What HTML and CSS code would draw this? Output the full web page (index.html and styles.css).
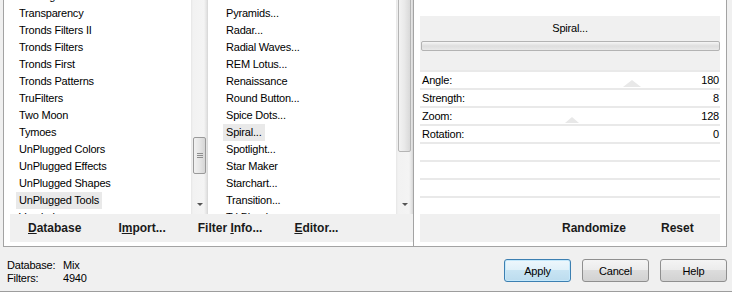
FILE: index.html
```html
<!DOCTYPE html>
<html lang="en">
<head>
    <meta charset="UTF-8">
    <title>Filters Unlimited</title>
    <link rel="stylesheet" href="styles.css">
</head>
<body>
    <div class="dialog">
        <div class="panes">
            <div class="frame filters">
                <div class="lists">
                    <div class="listbox cats">
                        <ul class="items">
                            <li>Tramages</li>
                            <li>Transparency</li>
                            <li>Tronds Filters II</li>
                            <li>Tronds Filters</li>
                            <li>Tronds First</li>
                            <li>Tronds Patterns</li>
                            <li>TruFilters</li>
                            <li>Two Moon</li>
                            <li>Tymoes</li>
                            <li>UnPlugged Colors</li>
                            <li>UnPlugged Effects</li>
                            <li>UnPlugged Shapes</li>
                            <li class="selected">UnPlugged Tools</li>
                            <li>Vanderlee</li>
                        </ul>
                        <div class="scrollbar">
                            <div class="thumb short"><span class="grip"></span></div>
                            <span class="arrow"></span>
                        </div>
                    </div>
                    <div class="listbox names">
                        <ul class="items">
                            <li>Pool...</li>
                            <li>Pyramids...</li>
                            <li>Radar...</li>
                            <li>Radial Waves...</li>
                            <li>REM Lotus...</li>
                            <li>Renaissance</li>
                            <li>Round Button...</li>
                            <li>Spice Dots...</li>
                            <li class="selected">Spiral...</li>
                            <li>Spotlight...</li>
                            <li>Star Maker</li>
                            <li>Starchart...</li>
                            <li>Transition...</li>
                            <li>Tri Blend...</li>
                        </ul>
                        <div class="scrollbar">
                            <div class="thumb tall"></div>
                            <span class="arrow"></span>
                        </div>
                    </div>
                </div>
                <div class="band actions">
                    <span class="link"><u>D</u>atabase</span>
                    <span class="link">I<u>m</u>port...</span>
                    <span class="link">Filter <u>I</u>nfo...</span>
                    <span class="link"><u>E</u>ditor...</span>
                </div>
            </div>

            <div class="frame params">
                <div class="band title">
                    <div class="name">Spiral...</div>
                    <div class="meter"></div>
                </div>
                <div class="rows">
                    <div class="row"><span>Angle:</span><span>180</span><i class="knob" style="left: 203px"></i></div>
                    <div class="row"><span>Strength:</span><span>8</span></div>
                    <div class="row"><span>Zoom:</span><span>128</span><i class="knob small" style="left: 145px"></i></div>
                    <div class="row"><span>Rotation:</span><span>0</span></div>
                    <div class="row"></div>
                    <div class="row"></div>
                    <div class="row"></div>
                    <div class="row"></div>
                </div>
                <div class="band tools">
                    <span class="link">Randomize</span>
                    <span class="link">Reset</span>
                </div>
            </div>
        </div>

        <div class="footer">
            <div class="status">
                <span>Database:</span><span>Mix</span>
                <span>Filters:</span><span>4940</span>
            </div>
            <div class="buttons">
                <button class="default">Apply</button>
                <button>Cancel</button>
                <button>Help</button>
            </div>
        </div>
    </div>
</body>
</html>
```

FILE: styles.css
```css
body {
    margin: 0;
    background-color: #f0f0f0;
    font-family: "Liberation Sans", Arial, sans-serif;
    font-size: 11px;
    letter-spacing: -0.2px;
    color: #000;
}

.dialog {
    width: 732px;
    height: 292px;
    overflow: hidden;
    border-bottom: 1px solid #9d9d9d;
    box-sizing: border-box;
}

.panes {
    display: flex;
    height: 247px;
    padding-left: 3px;
}

.frame {
    background-color: #fff;
    border: 1px solid #a3a3a3;
    border-top: none;
    box-sizing: border-box;
    display: flex;
    flex-direction: column;
}

.filters {
    width: 411px;
}

.params {
    width: 313px;
    border-left: none;
    padding: 0 6px 0 6px;
}

/* list boxes */
.lists {
    display: flex;
    height: 214px;
    padding-left: 6px;
}

.listbox {
    display: flex;
    height: 214px;
    overflow: hidden;
}

.cats {
    width: 204px;
}

.names {
    width: 199px;
}

.items {
    list-style: none;
    margin: -12px 0 0 0;
    padding: 0 0 0 6px;
    flex: 1;
}

.names .items {
    padding-left: 9px;
}

.items li {
    height: 17px;
    line-height: 17px;
    padding: 0 3px;
    white-space: nowrap;
}

.items li.selected {
    display: table;
    background-color: #e9e9e9;
}

.scrollbar {
    width: 17px;
    display: flex;
    flex-direction: column;
    align-items: center;
    background: linear-gradient(to right, #e6e6e6 0, #f2f2f2 2px, #f4f4f4 13px, #e0e0e0 16px, #d4d4d4 17px);
}

.cats .scrollbar {
    margin-right: 6px;
}

.thumb {
    width: 13px;
    box-sizing: border-box;
    border: 1px solid #9a9a9a;
    border-radius: 2px;
    background: linear-gradient(to right, #f1f1f1, #e6e6e6 50%, #d6d6d6);
    display: flex;
    align-items: center;
    justify-content: center;
}

.thumb.short {
    margin-top: 137px;
    height: 37px;
}

.thumb.tall {
    margin-top: -10px;
    height: 162px;
    border-color: #b5b5b5;
    background: linear-gradient(to right, #f3f3f3, #e9e9e9 50%, #d9d9d9);
}

.grip {
    width: 6px;
    height: 5px;
    background: repeating-linear-gradient(#8e8e8e 0, #8e8e8e 1px, transparent 1px, transparent 2px);
}

.arrow {
    margin-top: auto;
    margin-bottom: 8px;
    width: 0;
    height: 0;
    border-left: 3px solid transparent;
    border-right: 3px solid transparent;
    border-top: 3px solid #555;
}

/* grey bands */
.band {
    background-color: #f0f0f0;
}

.actions {
    height: 28px;
    margin-left: 6px;
    display: flex;
    align-items: center;
    padding-left: 18px;
}

.link {
    font-size: 12px;
    font-weight: bold;
    letter-spacing: 0;
    color: #1a1a1a;
}

.actions .link {
    margin-right: 37px;
}

.actions .link:nth-child(2) {
    margin-right: 32px;
}

.actions .link:nth-child(3) {
    margin-right: 32px;
}

.title {
    margin-top: 16px;
    height: 54px;
    padding-top: 5px;
    box-sizing: border-box;
}

.title .name {
    text-align: center;
    line-height: 14px;
}

.meter {
    margin: 6px 0 0 1px;
    height: 10px;
    border: 1px solid #b3b3b3;
    border-radius: 2px;
    box-sizing: border-box;
    background: linear-gradient(#f6f6f6, #dedede 50%, #e9e9e9);
}

.rows {
    display: flex;
    flex-direction: column;
}

.row {
    position: relative;
    height: 18px;
    border-top: 2px solid #e9e9e9;
    box-sizing: border-box;
    display: flex;
    justify-content: space-between;
    align-items: center;
    padding: 0 1px 0 2px;
}

.knob {
    position: absolute;
    top: 8px;
    width: 0;
    height: 0;
    border-left: 9px solid transparent;
    border-right: 9px solid transparent;
    border-bottom: 7px solid #e8e8e8;
}

.knob.small {
    top: 9px;
    border-left-width: 7px;
    border-right-width: 7px;
    border-bottom-width: 6px;
}

.tools {
    height: 28px;
    display: flex;
    align-items: center;
    padding-left: 142px;
}

.tools .link:first-child {
    margin-right: 35px;
}

/* footer */
.footer {
    display: flex;
    justify-content: space-between;
    height: 44px;
}

.status {
    display: grid;
    grid-template-columns: 56px auto;
    align-content: start;
    padding: 12px 0 0 7px;
    line-height: 13px;
}

.buttons {
    display: flex;
    gap: 11px;
    padding: 12px 5px 0 0;
}

button {
    width: 67px;
    height: 23px;
    font-family: "Liberation Sans", Arial, sans-serif;
    font-size: 11px;
    letter-spacing: -0.2px;
    color: #000;
    border: 1px solid #8f8f8f;
    border-radius: 3px;
    background: linear-gradient(#f4f4f4, #ebebeb 50%, #dcdcdc 50%, #d2d2d2);
    padding: 0;
}

button.default {
    border-color: #3c7fb1;
    background: linear-gradient(#eef7fc, #dff0f9 50%, #c8e4f3 50%, #bcdcee);
    box-shadow: inset 0 0 0 1px #c4e8fb;
}
```
